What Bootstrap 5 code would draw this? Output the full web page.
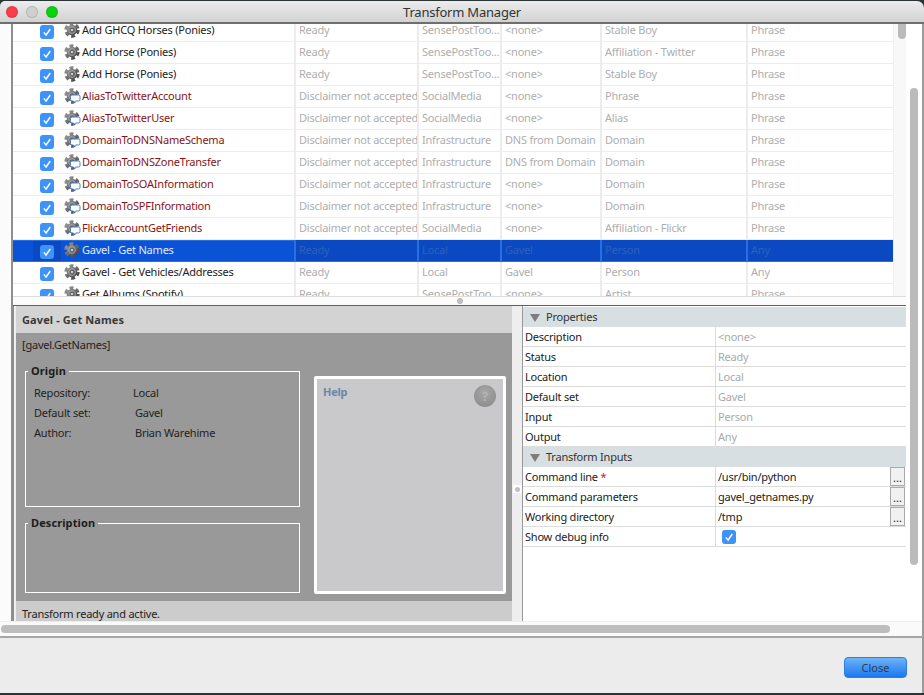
<!DOCTYPE html>
<html lang="en"><head><meta charset="utf-8"><title>Transform Manager</title>
<link rel="stylesheet" href="https://cdn.jsdelivr.net/npm/bootstrap@5.3.0/dist/css/bootstrap.min.css">
<style>
html,body{margin:0;height:695px;overflow:hidden;background:#2a3336}
body{font-family:"Noto Sans","DejaVu Sans",sans-serif;font-size:11px;line-height:14px;color:#222;letter-spacing:-.22px}
.win{width:924px;height:695px;padding-top:1px}
.titlebar{height:23px;display:grid;grid-template-columns:1fr auto 1fr;align-items:center;background:linear-gradient(#ececec,#d2d2d2);border-bottom:2px solid #6e6e6e;border-radius:5px 7px 0 0;font-size:13px;color:#333}
.lights{padding-left:6px;gap:8px}
.light{width:12px;height:12px;border-radius:50%;border:1px solid rgba(0,0,0,.12)}
.lred{background:#fc3d48}.lgrey{background:#cfcfcf}.lgreen{background:#0bd20f}
.workarea{height:612px;background:#fff;border-right:2px solid #9a9a9a}
.upper{height:597px}
.gutter{width:11px;background:#fbfbfb}
.centre{width:895px;border-left:2px solid #8f8f8f}
.listwrap{height:272px;overflow:hidden}
.listview{width:880px;height:272px;overflow:hidden}
.table.xfer{table-layout:fixed;width:880px;margin:-4px 0 0;border-collapse:separate;border-spacing:0;--bs-table-bg:transparent}
.table.xfer>tbody>tr>td{height:22px;padding:0 0 2px 3px;border-bottom:1px solid #ececec;border-right:2px solid #ececec;color:#aeaeae;white-space:nowrap;overflow:hidden;vertical-align:middle;box-shadow:none}
.table.xfer>tbody>tr>td:last-child{border-right:0}
.table.xfer>tbody>tr>td.namecell{padding:0 0 0 27px;color:#222}
.namecell .cellin{gap:10px}
.namecell.bad .rowname{color:#8b1414}
.cellin .iconwrap{width:18px;height:18px;margin-right:-10px;margin-bottom:2px;flex:none;display:block}
.rowname{margin-bottom:2px}
.tick{width:14px;height:14px;flex:none;display:block}
.cellin .tick{margin-top:2px}
.table.xfer>tbody>tr.picked>td{background:#0a49c2;color:#2f60bd;border-bottom-color:#2a6fe0;border-right-color:#2a6fe0}
.table.xfer>tbody>tr.picked>td.namecell{background:linear-gradient(90deg,#0a52d6 20px,#0a49c2 20px,#0a49c2 48px,#0a52d6 48px);color:#e3ebfa;box-shadow:inset 0 1px 0 #2a6fe0}
.vtrack{width:13px;background:#f8f8f8;border-left:1px solid #eee;padding-left:4px}
.vthumb{width:8px;height:15px;background:#bbb;border-radius:0 0 4px 4px}
.hsplit{height:10px;background:#fbfbfb;border-top:1px solid #ddd;border-bottom:1px solid #5f5f5f}
.knob{width:6px;height:6px;border-radius:50%;background:#c4c4c4;border:1px solid #b0b0b0}
.lower{height:315px}
.leftpane{width:500px;border-left:1px solid #8f8f8f;padding-left:2px;background:#eee;flex:none}
.detail{width:496px;height:315px;background:#999;overflow:hidden}
.dhead{height:27px;background:#d3d3d3;padding:7px 0 0 6px;font-weight:700;color:#3a3a3a;letter-spacing:.1px}
.dbody{height:268px;padding:5px 6px 0 6px}
.dstate{height:20px;background:#ccc;padding:6px 0 0 6px}
.dcols{gap:14px;margin-top:12px}
.leftcol{width:275px;margin-left:3px}
.fs{border:1px solid #fff;padding:0;margin:0}
.fs legend{float:none;width:auto;font-size:11px;line-height:14px;font-weight:700;margin:0 0 0 2px;padding:0 3px;color:#1c1c1c;letter-spacing:.1px}
.origin{height:143px}
.describe{height:77px;margin-top:9px!important}
.origingrid{display:grid;grid-template-columns:99px 1fr;row-gap:6px;margin-top:8px;padding-left:8px}
.nudge{padding-left:2px}
.helpbox{width:192px;height:218px;margin-top:12px;background:#c9c9cb;border:3px solid #fff;border-radius:2px;padding:6px 7px 6px 6px}
.helptitle{color:#6a87a8;font-weight:700}
.helpq{width:22px;height:22px;border-radius:50%;background:radial-gradient(circle at 50% 35%,#a8a8a8,#868686);color:#b4b4b4;font-weight:700;font-size:13px;line-height:22px;text-align:center}
.vsplit{width:10px;flex:none;background:#eee;border-right:1px solid #999;height:315px;padding-top:179px}
.vknob{width:9px;height:8px;background:#fff;display:flex;align-items:center;justify-content:center}
.vknob i{display:block;width:5px;height:5px;border-radius:50%;background:#c0c0c0}
.props{width:383px;background:#fff;flex:none;padding-top:1px}
.table.ptable{table-layout:fixed;width:383px;margin:0;border-collapse:separate;border-spacing:0;--bs-table-bg:transparent}
.table.ptable>tbody>tr>td{height:20px;padding:0 0 0 2px;border-bottom:1px solid #dcdcdc;border-right:0;color:#222;vertical-align:middle;white-space:nowrap;box-shadow:none}
.table.ptable>tbody>tr>td.val{border-left:1px solid #dcdcdc;color:#aaa;padding-left:2px}
.table.ptable>tbody>tr>td.val.live{color:#222}
.table.ptable>tbody>tr.sect>td{background:#d7dfe3;border-bottom:0;padding-left:7px;color:#333}
.tri{width:0;height:0;border-left:5px solid transparent;border-right:5px solid transparent;border-top:8px solid #7d7d7d;display:inline-block;margin-right:6px;vertical-align:-1px}
.star{color:#e01010}
.dots{width:15px;height:19px;border:1px solid #aaa;background:#f1f1f1;line-height:20px;text-align:center;font-size:11px;margin-right:1px;flex:none;padding:0;color:#222}
.outer{width:16px;padding-left:4px;background:#fff}
.outerthumb{width:8px;height:477px;margin-top:64px;background:#bbb;border-radius:4px}
.hbar{height:15px;background:#fafafa;padding:3px 0 0 1px;border-top:1px solid #eee}
.hthumb{width:889px;height:8px;background:#bdbdbd;border-radius:4px}
.foot{height:57px;background:#ececec;border-top:2px solid #a6a6a6;border-right:2px solid #9a9a9a;padding:19px 15px 0 0}
.closebtn{width:63px;height:21px;padding:0;font-size:11px;line-height:19px;color:#2d3f55;background:linear-gradient(#6db3f7,#1a78ee);border:1px solid #2a7fe6;border-radius:4px}
</style></head><body>
<svg width="0" height="0" class="d-block" aria-hidden="true"><defs>
<linearGradient id="gg" x1="0" y1="0" x2="1" y2="1"><stop offset="0" stop-color="#9a9a9a"/><stop offset="1" stop-color="#3f3f3f"/></linearGradient>
<symbol id="gear" viewBox="0 0 18 18"><circle cx="8" cy="9" r="6.2" fill="none" stroke="url(#gg)" stroke-width="3" stroke-dasharray="3.9 2.6"/><circle cx="8" cy="9" r="5.3" fill="url(#gg)"/><circle cx="8" cy="9" r="3.4" fill="none" stroke="#a8a8a8" stroke-width="1"/><circle cx="8" cy="9" r="1.6" fill="#dcdcdc" stroke="#444" stroke-width=".6"/></symbol>
<symbol id="chat" viewBox="0 0 18 18"><use href="#gear"/><path d="M8 8h6.5a1.5 1.5 0 0 1 1.5 1.5v3a1.5 1.5 0 0 1-1.5 1.5H11.500l-2 2v-2H8a1.500 1.500 0 0 1-1.500-1.500v-3A1.500 1.500 0 0 1 8 8z" fill="#fff" stroke="#3f7fd6" stroke-width="1"/></symbol>
<symbol id="box" viewBox="0 0 14 14"><rect width="14" height="14" rx="3" fill="#3d93f8"/><path d="M3.8 7.400l2.300 2.600 4.200-6" fill="none" stroke="#fff" stroke-width="1.400"/></symbol>
</defs></svg>
<div class="win d-flex flex-column">
<div class="titlebar">
 <div class="lights d-flex"><span class="light lred"></span><span class="light lgrey"></span><span class="light lgreen"></span></div>
 <div>Transform Manager</div><div></div>
</div>
<div class="workarea">
<div class="upper d-flex">
 <div class="gutter"></div>
 <div class="centre d-flex flex-column">
  <div class="listwrap d-flex">
   <div class="listview">
    <table class="table xfer"><colgroup><col style="width:283px"><col style="width:123px"><col style="width:83px"><col style="width:100px"><col style="width:146px"><col></colgroup><tbody>
<tr><td class="namecell"><div class="cellin d-flex align-items-center"><svg class="tick"><use href="#box"/></svg><svg class="iconwrap"><use href="#gear"/></svg><span class="rowname">Add GHCQ Horses (Ponies)</span></div></td><td>Ready</td><td>SensePostToo...</td><td>&lt;none&gt;</td><td>Stable Boy</td><td>Phrase</td></tr>
<tr><td class="namecell"><div class="cellin d-flex align-items-center"><svg class="tick"><use href="#box"/></svg><svg class="iconwrap"><use href="#gear"/></svg><span class="rowname">Add Horse (Ponies)</span></div></td><td>Ready</td><td>SensePostToo...</td><td>&lt;none&gt;</td><td>Affiliation - Twitter</td><td>Phrase</td></tr>
<tr><td class="namecell"><div class="cellin d-flex align-items-center"><svg class="tick"><use href="#box"/></svg><svg class="iconwrap"><use href="#gear"/></svg><span class="rowname">Add Horse (Ponies)</span></div></td><td>Ready</td><td>SensePostToo...</td><td>&lt;none&gt;</td><td>Stable Boy</td><td>Phrase</td></tr>
<tr><td class="namecell bad"><div class="cellin d-flex align-items-center"><svg class="tick"><use href="#box"/></svg><svg class="iconwrap"><use href="#chat"/></svg><span class="rowname">AliasToTwitterAccount</span></div></td><td>Disclaimer not accepted</td><td>SocialMedia</td><td>&lt;none&gt;</td><td>Phrase</td><td>Phrase</td></tr>
<tr><td class="namecell bad"><div class="cellin d-flex align-items-center"><svg class="tick"><use href="#box"/></svg><svg class="iconwrap"><use href="#chat"/></svg><span class="rowname">AliasToTwitterUser</span></div></td><td>Disclaimer not accepted</td><td>SocialMedia</td><td>&lt;none&gt;</td><td>Alias</td><td>Phrase</td></tr>
<tr><td class="namecell bad"><div class="cellin d-flex align-items-center"><svg class="tick"><use href="#box"/></svg><svg class="iconwrap"><use href="#chat"/></svg><span class="rowname">DomainToDNSNameSchema</span></div></td><td>Disclaimer not accepted</td><td>Infrastructure</td><td>DNS from Domain</td><td>Domain</td><td>Phrase</td></tr>
<tr><td class="namecell bad"><div class="cellin d-flex align-items-center"><svg class="tick"><use href="#box"/></svg><svg class="iconwrap"><use href="#chat"/></svg><span class="rowname">DomainToDNSZoneTransfer</span></div></td><td>Disclaimer not accepted</td><td>Infrastructure</td><td>DNS from Domain</td><td>Domain</td><td>Phrase</td></tr>
<tr><td class="namecell bad"><div class="cellin d-flex align-items-center"><svg class="tick"><use href="#box"/></svg><svg class="iconwrap"><use href="#chat"/></svg><span class="rowname">DomainToSOAInformation</span></div></td><td>Disclaimer not accepted</td><td>Infrastructure</td><td>&lt;none&gt;</td><td>Domain</td><td>Phrase</td></tr>
<tr><td class="namecell bad"><div class="cellin d-flex align-items-center"><svg class="tick"><use href="#box"/></svg><svg class="iconwrap"><use href="#chat"/></svg><span class="rowname">DomainToSPFInformation</span></div></td><td>Disclaimer not accepted</td><td>Infrastructure</td><td>&lt;none&gt;</td><td>Domain</td><td>Phrase</td></tr>
<tr><td class="namecell bad"><div class="cellin d-flex align-items-center"><svg class="tick"><use href="#box"/></svg><svg class="iconwrap"><use href="#chat"/></svg><span class="rowname">FlickrAccountGetFriends</span></div></td><td>Disclaimer not accepted</td><td>SocialMedia</td><td>&lt;none&gt;</td><td>Affiliation - Flickr</td><td>Phrase</td></tr>
<tr class="picked"><td class="namecell"><div class="cellin d-flex align-items-center"><svg class="tick"><use href="#box"/></svg><svg class="iconwrap"><use href="#gear"/></svg><span class="rowname">Gavel - Get Names</span></div></td><td>Ready</td><td>Local</td><td>Gavel</td><td>Person</td><td>Any</td></tr>
<tr><td class="namecell"><div class="cellin d-flex align-items-center"><svg class="tick"><use href="#box"/></svg><svg class="iconwrap"><use href="#gear"/></svg><span class="rowname">Gavel - Get Vehicles/Addresses</span></div></td><td>Ready</td><td>Local</td><td>Gavel</td><td>Person</td><td>Any</td></tr>
<tr><td class="namecell"><div class="cellin d-flex align-items-center"><svg class="tick"><use href="#box"/></svg><svg class="iconwrap"><use href="#gear"/></svg><span class="rowname">Get Albums (Spotify)</span></div></td><td>Ready</td><td>SensePostToo...</td><td>&lt;none&gt;</td><td>Artist</td><td>Phrase</td></tr>
    </tbody></table>
   </div>
   <div class="vtrack flex-grow-1"><div class="vthumb"></div></div>
  </div>
  <div class="hsplit d-flex justify-content-center align-items-center"><span class="knob"></span></div>
  <div class="lower d-flex">
   <div class="leftpane">
    <div class="detail d-flex flex-column">
     <div class="dhead">Gavel - Get Names</div>
     <div class="dbody">
      <div>[gavel.GetNames]</div>
      <div class="dcols d-flex">
       <div class="leftcol">
        <fieldset class="fs origin"><legend>Origin</legend>
         <div class="origingrid"><span>Repository:</span><span>Local</span><span>Default set:</span><span class="nudge">Gavel</span><span>Author:</span><span class="nudge">Brian Warehime</span></div>
        </fieldset>
        <fieldset class="fs describe"><legend>Description</legend></fieldset>
       </div>
       <div class="helpbox d-flex justify-content-between align-items-start"><span class="helptitle">Help</span><span class="helpq">?</span></div>
      </div>
     </div>
     <div class="dstate">Transform ready and active.</div>
    </div>
   </div>
   <div class="vsplit"><div class="vknob"><i></i></div></div>
   <div class="props">
    <table class="table ptable"><colgroup><col style="width:192px"><col></colgroup><tbody>
     <tr class="sect"><td colspan="2"><span class="tri"></span>Properties</td></tr>
     <tr><td>Description</td><td class="val">&lt;none&gt;</td></tr>
     <tr><td>Status</td><td class="val">Ready</td></tr>
     <tr><td>Location</td><td class="val">Local</td></tr>
     <tr><td>Default set</td><td class="val">Gavel</td></tr>
     <tr><td>Input</td><td class="val">Person</td></tr>
     <tr><td>Output</td><td class="val">Any</td></tr>
     <tr class="sect"><td colspan="2"><span class="tri"></span>Transform Inputs</td></tr>
     <tr><td>Command line <span class="star">*</span></td><td class="val live"><div class="d-flex justify-content-between align-items-center"><span>/usr/bin/python</span><button type="button" class="dots">...</button></div></td></tr>
     <tr><td>Command parameters</td><td class="val live"><div class="d-flex justify-content-between align-items-center"><span>gavel_getnames.py</span><button type="button" class="dots">...</button></div></td></tr>
     <tr><td>Working directory</td><td class="val live"><div class="d-flex justify-content-between align-items-center"><span>/tmp</span><button type="button" class="dots">...</button></div></td></tr>
     <tr><td>Show debug info</td><td class="val live"><svg class="tick ms-1"><use href="#box"/></svg></td></tr>
    </tbody></table>
   </div>
  </div>
 </div>
 <div class="outer"><div class="outerthumb"></div></div>
</div>
<div class="hbar"><div class="hthumb"></div></div>
</div>
<div class="foot d-flex justify-content-end align-items-start"><button type="button" class="btn closebtn">Close</button></div>
</div>
</body></html>
